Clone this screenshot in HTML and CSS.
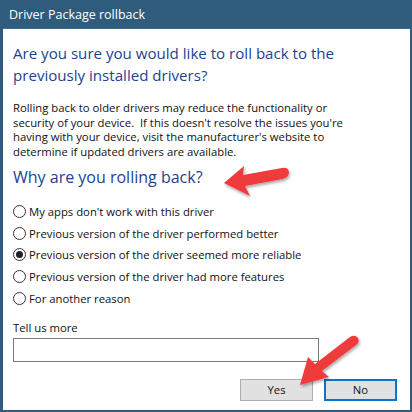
FILE: index.html
```html
<!DOCTYPE html>
<html>
<head>
<meta charset="utf-8">
<link rel="stylesheet" href="styles.css">
</head>
<body>
<div class="window">
  <div class="titlebar">Driver Package rollback</div>
  <div class="content">
    <h1 class="instruction">Are you sure you would like to roll back to the previously installed drivers?</h1>
    <p class="desc">Rolling back to older drivers may reduce the functionality or security of your device.&nbsp; If this doesn't resolve the issues you're having with your device, visit the manufacturer's website to determine if updated drivers are available.</p>
    <h2 class="question">Why are you rolling back?</h2>
    <div class="options">
      <label class="option"><span class="radio"></span>My apps don't work with this driver</label>
      <label class="option"><span class="radio"></span>Previous version of the driver performed better</label>
      <label class="option"><span class="radio checked"></span>Previous version of the driver seemed more reliable</label>
      <label class="option"><span class="radio"></span>Previous version of the driver had more features</label>
      <label class="option"><span class="radio"></span>For another reason</label>
    </div>
    <div class="more">
      <div class="more-label">Tell us more</div>
      <div class="textbox"></div>
    </div>
    <div class="buttons">
      <div class="btn">Yes</div>
      <div class="btn default">No</div>
    </div>
  </div>
  <svg class="arrow arrow-1" width="80" height="40" viewBox="0 0 80 40">
    <defs>
      <filter id="sh1" x="-20%" y="-20%" width="140%" height="160%">
        <feDropShadow dx="1" dy="2" stdDeviation="1.5" flood-color="#000" flood-opacity="0.35"/>
      </filter>
    </defs>
    <path filter="url(#sh1)" d="M4 23 L24 6 L23 15 L62 8 Q68 7 69 12 Q69 17 63 19 L25 26 L30 36 Z" fill="#f03b3e"/>
  </svg>
  <svg class="arrow arrow-2" width="70" height="60" viewBox="0 0 70 60">
    <defs>
      <filter id="sh2" x="-20%" y="-20%" width="140%" height="160%">
        <feDropShadow dx="1" dy="2" stdDeviation="1.5" flood-color="#000" flood-opacity="0.35"/>
      </filter>
    </defs>
    <path filter="url(#sh2)" d="M6 52 L14 24 L21 31 L56 4 Q61 1 64 5 Q66 9 62 12 L28 38 L35 44 Z" fill="#f03b3e"/>
  </svg>
</div>
</body>
</html>
```
FILE: styles.css
```css
* { box-sizing: border-box; }
html, body { margin: 0; padding: 0; background: #fff; }
body { width: 412px; height: 412px; overflow: hidden; }

.window {
  position: relative;
  width: 412px;
  height: 412px;
  background: #2f5b7d;
  padding: 0 2px 2px 3px;
  display: flex;
  flex-direction: column;
  font-family: "Open Sans", "Noto Sans", sans-serif;
}

.titlebar {
  height: 29px;
  flex: none;
  color: #fff;
  font-size: 12.5px;
  line-height: 29px;
  padding-left: 6px;
  border-bottom: 1px solid #3f6a8a;
}

.content {
  flex: 1;
  background: #fff;
  padding: 13px 10px 0 10px;
  display: flex;
  flex-direction: column;
}

.instruction {
  margin: 0;
  font-weight: normal;
  font-size: 15.1px;
  line-height: 22px;
  color: #1d3f91;
  width: 380px;
}

.desc {
  margin: 15px 0 0 0;
  font-size: 11.3px;
  line-height: 14.6px;
  color: #111;
  width: 330px;
}

.question {
  margin: 7px 0 0 0;
  font-weight: normal;
  font-size: 16px;
  line-height: 22px;
  color: #1d3f91;
}

.options {
  margin-top: 12px;
  display: flex;
  flex-direction: column;
}

.option {
  display: flex;
  align-items: center;
  height: 21.8px;
  font-size: 11.3px;
  color: #111;
}

.radio {
  width: 13px;
  height: 13px;
  border: 1px solid #333;
  border-radius: 50%;
  margin-right: 3px;
  flex: none;
  display: flex;
  align-items: center;
  justify-content: center;
  background: #fff;
}

.radio.checked::after {
  content: "";
  width: 7px;
  height: 7px;
  border-radius: 50%;
  background: #222;
}

.more {
  margin-top: 11px;
}

.more-label {
  font-size: 11.3px;
  line-height: 16px;
  color: #111;
}

.textbox {
  margin-top: 2px;
  width: 306px;
  height: 24px;
  border: 1px solid #7a7a7a;
  background: #fff;
}

.buttons {
  margin-top: 17px;
  display: flex;
  justify-content: flex-end;
  gap: 11px;
  padding-right: 3px;
}

.btn {
  width: 73px;
  height: 22px;
  background: #e1e1e1;
  border: 1px solid #adadad;
  font-size: 11.3px;
  line-height: 20px;
  text-align: center;
  color: #111;
}

.btn.default {
  border: 2px solid #0a74d0;
  line-height: 18px;
}

.arrow {
  position: absolute;
  overflow: visible;
}
.arrow-1 { left: 220px; top: 160px; }
.arrow-2 { left: 294px; top: 333px; }
```
